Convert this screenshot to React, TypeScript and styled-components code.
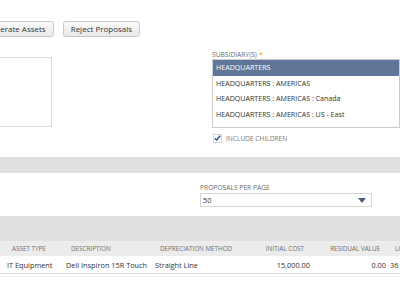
import React from "react";
import styled, { createGlobalStyle } from "styled-components";

const GlobalStyle = createGlobalStyle`
  html, body { margin: 0; padding: 0; overflow: hidden; background: #ffffff; }
  body { font-family: "Open Sans", "Liberation Sans", sans-serif; color: #333333; }
`;

const Page = styled.div`
  margin-left: -100px;
  width: 580px;
`;

const Toolbar = styled.div`
  display: flex;
  gap: 9px;
  padding: 21px 0 0 77px;
`;

const Button = styled.button`
  height: 16px;
  padding: 0 7px;
  border: 1px solid #cacaca;
  border-radius: 3px;
  background: linear-gradient(#fbfbfb, #e8e8e8);
  font-family: "Open Sans", "Liberation Sans", sans-serif;
  font-size: 8px;
  line-height: 14px;
  color: #333333;
  box-sizing: border-box;
  white-space: nowrap;
`;

const FormSection = styled.div`
  display: grid;
  grid-template-columns: 312px 188px;
  margin-top: 12px;
`;

const LeftCol = styled.div`
  padding-top: 8px;
`;

const TextArea = styled.div`
  margin-left: 20px;
  width: 132px;
  height: 70px;
  box-sizing: border-box;
  border: 1px solid #dcdcdc;
`;

const RightCol = styled.div`
  display: flex;
  flex-direction: column;
`;

const Label = styled.div`
  font-size: 6.7px;
  line-height: 10px;
  height: 10px;
  color: #6b6b6b;
  text-transform: uppercase;
  white-space: nowrap;
`;

const Required = styled.span`
  color: #f0a000;
  font-size: 8px;
  margin-left: 2px;
`;

const ListBox = styled.div`
  height: 69px;
  box-sizing: border-box;
  border: 1px solid #cccccc;
  overflow: hidden;
`;

const ListItem = styled.div<{ $selected?: boolean }>`
  height: 15.7px;
  line-height: 15.7px;
  padding-left: 3px;
  font-size: 7.1px;
  white-space: nowrap;
  color: ${(p) => (p.$selected ? "#ffffff" : "#333333")};
  background: ${(p) => (p.$selected ? "#5f7698" : "transparent")};
`;

const CheckRow = styled.label`
  display: flex;
  align-items: center;
  gap: 4px;
  margin-top: 5px;
  padding-left: 1px;
  height: 10px;
`;

const CheckBox = styled.span`
  width: 9px;
  height: 9px;
  box-sizing: border-box;
  border: 1px solid #d4d4d4;
  background: #ffffff;
  display: flex;
  align-items: center;
  justify-content: center;
`;

const CheckText = styled.span`
  font-size: 6.6px;
  color: #7a7a7a;
  text-transform: uppercase;
  white-space: nowrap;
`;

const GrayBar = styled.div<{ $h: number }>`
  height: ${(p) => p.$h}px;
  background: #e0e0e0;
`;

const Filters = styled.div`
  padding: 10px 0 9px 300px;
`;

const SelectBox = styled.div`
  width: 172px;
  height: 14px;
  box-sizing: border-box;
  border: 1px solid #d6d6d6;
  display: flex;
  align-items: center;
  justify-content: space-between;
  padding: 0 5px 0 2px;
  font-size: 7.3px;
  color: #333333;
`;

const TableRow = styled.div<{ $bg: string; $h: number }>`
  display: grid;
  grid-template-columns: 105px 59px 89px 77px 82px 76px 80px;
  height: ${(p) => p.$h}px;
  align-items: center;
  background: ${(p) => p.$bg};
  box-sizing: border-box;
`;

const HeadCell = styled.div<{ $right?: boolean }>`
  font-size: 6.3px;
  color: #6e6e6e;
  text-transform: uppercase;
  white-space: nowrap;
  padding: 0 8px 0 7px;
  text-align: ${(p) => (p.$right ? "right" : "left")};
`;

const DataCell = styled.div<{ $right?: boolean }>`
  font-size: 7.35px;
  color: #333333;
  white-space: nowrap;
  padding: 0 2px;
  text-align: ${(p) => (p.$right ? "right" : "left")};
`;

const RowLine = styled.div`
  height: 1px;
  background: #dddddd;
`;

const Footer = styled.div`
  margin-top: 2px;
  height: 1px;
  background: #ececec;
`;

const columns = [
  { head: "", data: "", right: false },
  { head: "Asset Type", data: "IT Equipment", right: false },
  { head: "Description", data: "Dell Inspiron 15R Touch", right: false },
  { head: "Depreciation Method", data: "Straight Line", right: false },
  { head: "Initial Cost", data: "15,000.00", right: true },
  { head: "Residual Value", data: "0.00", right: true },
  { head: "Lifetime", data: "36", right: false },
];

const subsidiaries = [
  "HEADQUARTERS",
  "HEADQUARTERS : AMERICAS",
  "HEADQUARTERS : AMERICAS : Canada",
  "HEADQUARTERS : AMERICAS : US - East",
  "HEADQUARTERS : AMERICAS : US - West",
];

export default function App() {
  return (
    <>
      <GlobalStyle />
      <Page>
        <Toolbar>
          <Button>Generate Assets</Button>
          <Button>Reject Proposals</Button>
        </Toolbar>
        <FormSection>
          <LeftCol>
            <TextArea />
          </LeftCol>
          <RightCol>
            <Label>
              Subsidiary(s)<Required>*</Required>
            </Label>
            <ListBox>
              {subsidiaries.map((s, i) => (
                <ListItem key={s} $selected={i === 0}>
                  {s}
                </ListItem>
              ))}
            </ListBox>
            <CheckRow>
              <CheckBox>
                <svg width="9" height="8" viewBox="0 0 9 8">
                  <path d="M1 4.2 L3.4 6.5 L8 1.2" fill="none" stroke="#24509a" strokeWidth="1.8" />
                </svg>
              </CheckBox>
              <CheckText>Include Children</CheckText>
            </CheckRow>
          </RightCol>
        </FormSection>
        <GrayBar $h={16} style={{ marginTop: 14 }} />
        <Filters>
          <Label>Proposals per page</Label>
          <SelectBox>
            <span>50</span>
            <svg width="8" height="5" viewBox="0 0 8 5">
              <path d="M0 0 H8 L4 5 Z" fill="#4a5d7c" />
            </svg>
          </SelectBox>
        </Filters>
        <GrayBar $h={25} />
        <TableRow $bg="#ececec" $h={15}>
          {columns.map((c, i) => (
            <HeadCell key={i} $right={c.right}>
              {c.head}
            </HeadCell>
          ))}
        </TableRow>
        <TableRow $bg="#ffffff" $h={17}>
          {columns.map((c, i) => (
            <DataCell key={i} $right={c.right}>
              {c.data}
            </DataCell>
          ))}
        </TableRow>
        <RowLine />
        <Footer />
      </Page>
    </>
  );
}
